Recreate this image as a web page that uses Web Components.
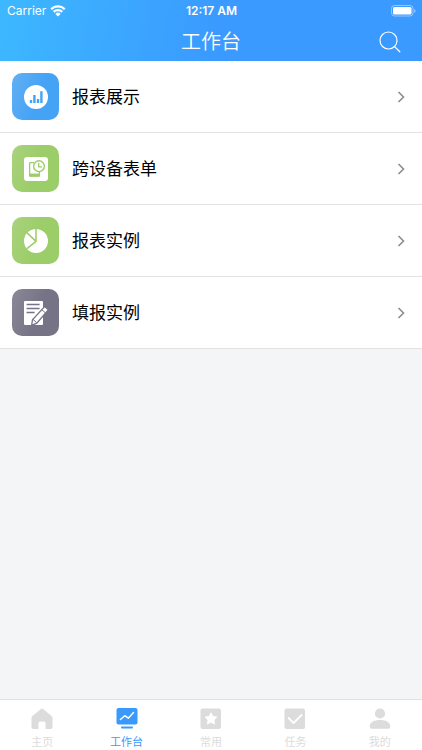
<!DOCTYPE html>
<html lang="zh-CN">
<head>
<meta charset="UTF-8">
<meta name="viewport" content="width=device-width, initial-scale=1">
<title>工作台</title>
<style>
    body {
        margin: 0;
        font-family: Inter, "Noto Sans CJK SC", sans-serif;
        color: #000;
    }
</style>
</head>
<body>
<work-app>
    <status-bar slot="header" carrier="Carrier" time="12:17 AM"></status-bar>
    <nav-bar slot="header">工作台</nav-bar>

    <list-row icon="chart" color="blue">报表展示</list-row>
    <list-row icon="device" color="green">跨设备表单</list-row>
    <list-row icon="pie" color="green">报表实例</list-row>
    <list-row icon="form" color="gray">填报实例</list-row>

    <tab-item slot="tabs" icon="home">主页</tab-item>
    <tab-item slot="tabs" icon="board" active>工作台</tab-item>
    <tab-item slot="tabs" icon="star">常用</tab-item>
    <tab-item slot="tabs" icon="task">任务</tab-item>
    <tab-item slot="tabs" icon="user">我的</tab-item>
</work-app>

<script>
// === Icons ===
// "var(--tile)" is the colour of the tile under the icon
const rowIcons = {
    chart: `
        <circle cx="12" cy="12" r="12" fill="#fff"/>
        <path d="M5.800 15h2.400v3H5.800zM9.200 10h2.400v8H9.200zM12.800 14h2.400v4h-2.400zM16.200 6.200h2.400V18h-2.400z" fill="var(--tile)"/>`,
    device: `
        <rect width="24" height="24" rx="3" fill="#fff"/>
        <path d="M10 5.600H6.400a.8.8 0 0 0-.8.8v12a.8.8 0 0 0 .8.8h8.200a.8.8 0 0 0 .8-.8V15" fill="none" stroke="var(--tile)" stroke-width="1.300"/>
        <path d="M5.200 16.600h10.400v2.800H5.200z" fill="var(--tile)"/>
        <circle cx="15" cy="9.200" r="5.400" fill="#fff" stroke="var(--tile)" stroke-width="1.400"/>
        <path d="M14.700 5.800v4h3.400" fill="none" stroke="var(--tile)" stroke-width="1.300"/>`,
    pie: `
        <circle cx="12" cy="12" r="12" fill="#fff"/>
        <path d="M12-.5V12.400L2.600 19.800M12 12.400L2.800 3.600" fill="none" stroke="var(--tile)" stroke-width="1.500"/>`,
    form: `
        <path d="M1 0h17a1 1 0 0 1 1 1v22a1 1 0 0 1-1 1H1a1 1 0 0 1-1-1V1a1 1 0 0 1 1-1z" fill="#fff"/>
        <path d="M2.600 3.400h13M2.600 7.400h13M2.600 11.400h8" stroke="var(--tile)" stroke-width="1.500"/>
        <path d="M20.600 5.600l3.800 3.200-11.600 13.400-5.200 2.200.9-5.700z" fill="#fff" stroke="var(--tile)" stroke-width="1.300"/>
        <path d="M17.600 8.600l3.800 3.200M8.800 18.200l3.800 3.400" stroke="var(--tile)" stroke-width="1"/>`
};

const tabIcons = {
    home: `<path d="M11 0.600a1.600 1.600 0 0 0-1.100.4L1.200 8.200Q.5 8.800.5 9.800V19q0 2 2 2H7.400v-5.600q0-1.800 1.800-1.800h3.600q1.800 0 1.800 1.800V21h4.900q2 0 2-2V9.800q0-1-.7-1.600L12.100 1A1.600 1.600 0 0 0 11 .6z" fill="currentColor"/>`,
    board: `
        <rect x=".5" width="21" height="16.500" rx="2" fill="currentColor"/>
        <path d="M4.400 11.500l4.400-3.800 3.500 2.500 5.200-5.600" fill="none" stroke="#fff" stroke-width="1.500" stroke-linecap="round" stroke-linejoin="round"/>
        <rect x="5" y="18.500" width="12" height="2" rx="1" fill="currentColor"/>`,
    star: `
        <rect x=".5" y=".5" width="20.500" height="20.500" rx="2" fill="currentColor"/>
        <path d="M11 4.800l1.800 3.700 4 .6-2.900 2.900.7 4-3.600-1.900-3.600 1.900.7-4-2.900-2.900 4-.6z" fill="#fff" stroke="#fff" stroke-linejoin="round"/>`,
    task: `
        <rect x=".5" y=".5" width="20.500" height="20.500" rx="2" fill="currentColor"/>
        <path d="M4.600 10l5 5 8-8" fill="none" stroke="#fff" stroke-width="1.800" stroke-linecap="round" stroke-linejoin="round"/>`,
    user: `
        <circle cx="11" cy="5.500" r="5.100" fill="currentColor"/>
        <path d="M.7 18.500C.7 14 5.500 12 11 12s10.300 2 10.300 6.500q0 2.300-2 2.300H2.700q-2 0-2-2.300z" fill="currentColor"/>`
};


// === Web Component: WorkApp ===
class WorkApp extends HTMLElement {
    constructor() {
        super();
        this.attachShadow({ mode: 'open' }).innerHTML = `
            <style>
                :host {
                    display: flex;
                    flex-direction: column;
                    min-height: 100vh;
                    background: #f4f5f7;
                }
                header {
                    background: linear-gradient(100deg, #3db8ff 0%, #3a9aff 52%);
                }
                main {
                    flex: 1;
                }
                nav {
                    display: flex;
                    background: #fff;
                    border-top: 1px solid #dfe1e6;
                    position: sticky;
                    bottom: 0;
                }
            </style>
            <header><slot name="header"></slot></header>
            <main><slot></slot></main>
            <nav><slot name="tabs"></slot></nav>
        `;
    }
}

customElements.define('work-app', WorkApp);


// === Web Component: StatusBar ===
class StatusBar extends HTMLElement {
    constructor() {
        super();
        this.attachShadow({ mode: 'open' });
    }

    connectedCallback() {
        this.shadowRoot.innerHTML = `
            <style>
                :host {
                    display: grid;
                    grid-template-columns: 1fr auto 1fr;
                    align-items: center;
                    height: 22px;
                    padding: 0 6px 0 7px;
                    color: #fff;
                    font-size: 12px;
                    line-height: 22px;
                }
                .carrier {
                    display: flex;
                    align-items: center;
                    gap: 4px;
                }
                .time {
                    font-weight: 600;
                }
                .battery {
                    justify-self: end;
                }
                svg {
                    display: block;
                }
            </style>
            <span class="carrier">
                <span>${this.getAttribute('carrier')}</span>
                <svg width="16" height="12" viewBox="0 0 16 12" aria-hidden="true">
                    <path d="M1.200 4.200a9.700 9.700 0 0 1 13.600 0M3.700 6.900a6.100 6.100 0 0 1 8.600 0" fill="none" stroke="#fff" stroke-width="2.200"/>
                    <path d="M8 11.500L5.400 8.900a3.700 3.700 0 0 1 5.200 0z" fill="#fff"/>
                </svg>
            </span>
            <span class="time">${this.getAttribute('time')}</span>
            <svg class="battery" width="25" height="12" viewBox="0 0 25 12" aria-hidden="true">
                <rect x=".5" y=".5" width="21.500" height="10.500" rx="3" fill="none" stroke="#fff" stroke-opacity=".45"/>
                <rect x="2" y="2" width="18.500" height="7.500" rx="1.500" fill="#fff"/>
                <path d="M23.200 4q1.300.5 1.300 1.900t-1.300 1.900z" fill="#fff" fill-opacity=".5"/>
            </svg>
        `;
    }
}

customElements.define('status-bar', StatusBar);


// === Web Component: NavBar ===
class NavBar extends HTMLElement {
    constructor() {
        super();
        this.attachShadow({ mode: 'open' }).innerHTML = `
            <style>
                :host {
                    display: grid;
                    grid-template-columns: 1fr auto 1fr;
                    align-items: center;
                    height: 39px;
                    padding: 0 20px;
                    color: #fff;
                }
                h1 {
                    grid-column: 2;
                    margin: 0;
                    font-size: 20px;
                    font-weight: 350;
                    line-height: 38px;
                }
                button {
                    justify-self: end;
                    padding: 0;
                    border: 0;
                    background: none;
                    color: inherit;
                    cursor: pointer;
                }
                svg {
                    display: block;
                }
            </style>
            <h1><slot></slot></h1>
            <button type="button" aria-label="搜索">
                <svg width="23" height="22" viewBox="0 0 23 22">
                    <circle cx="9.500" cy="9.500" r="8.500" fill="none" stroke="currentColor" stroke-width="1.200"/>
                    <path d="M15.600 15.600l5.200 5.200" stroke="currentColor" stroke-width="1.300" stroke-linecap="round"/>
                </svg>
            </button>
        `;
    }
}

customElements.define('nav-bar', NavBar);


// === Web Component: ListRow ===
class ListRow extends HTMLElement {
    constructor() {
        super();
        this.attachShadow({ mode: 'open' });
    }

    connectedCallback() {
        this.shadowRoot.innerHTML = `
            <style>
                :host {
                    --tile: #45a3f5;
                    --tile-start: #62b0f3;
                    display: block;
                    background: #fff;
                    border-bottom: 1px solid #e2e2e4;
                }
                :host([color="green"]) {
                    --tile: #9bcd68;
                    --tile-start: #aad27e;
                }
                :host([color="gray"]) {
                    --tile: #757385;
                    --tile-start: #8b8998;
                }
                a {
                    display: flex;
                    align-items: center;
                    gap: 13px;
                    padding: 12px 16px 12px 12px;
                    color: inherit;
                    text-decoration: none;
                }
                .tile {
                    display: flex;
                    align-items: center;
                    justify-content: center;
                    width: 47px;
                    height: 47px;
                    border-radius: 10px;
                    background: linear-gradient(110deg, var(--tile-start), var(--tile) 55%);
                }
                .tile svg {
                    overflow: visible;
                }
                .label {
                    flex: 1;
                    font-size: 17px;
                    line-height: 24px;
                }
            </style>
            <a href="#">
                <span class="tile">
                    <svg width="24" height="24" viewBox="0 0 24 24" aria-hidden="true">${rowIcons[this.getAttribute('icon')]}</svg>
                </span>
                <span class="label"><slot></slot></span>
                <svg width="9" height="12" viewBox="0 0 9 12" aria-hidden="true">
                    <path d="M1.500 1l5 5-5 5" fill="none" stroke="#8c8c8c" stroke-width="1.600"/>
                </svg>
            </a>
        `;
    }
}

customElements.define('list-row', ListRow);


// === Web Component: TabItem ===
class TabItem extends HTMLElement {
    constructor() {
        super();
        this.attachShadow({ mode: 'open' });
    }

    connectedCallback() {
        this.shadowRoot.innerHTML = `
            <style>
                :host {
                    flex: 1;
                    color: #dcdcdc;
                }
                :host([active]) {
                    color: #3a99fc;
                }
                a {
                    display: flex;
                    flex-direction: column;
                    align-items: center;
                    gap: 6px;
                    padding: 8px 0 0;
                    color: inherit;
                    font-size: 11px;
                    line-height: 15px;
                    text-decoration: none;
                }
                svg {
                    display: block;
                }
            </style>
            <a href="#" ${this.hasAttribute('active') ? 'aria-current="page"' : ''}>
                <svg width="22" height="21" viewBox="0 0 22 21" aria-hidden="true">${tabIcons[this.getAttribute('icon')]}</svg>
                <span><slot></slot></span>
            </a>
        `;
    }
}

customElements.define('tab-item', TabItem);
</script>
</body>
</html>
